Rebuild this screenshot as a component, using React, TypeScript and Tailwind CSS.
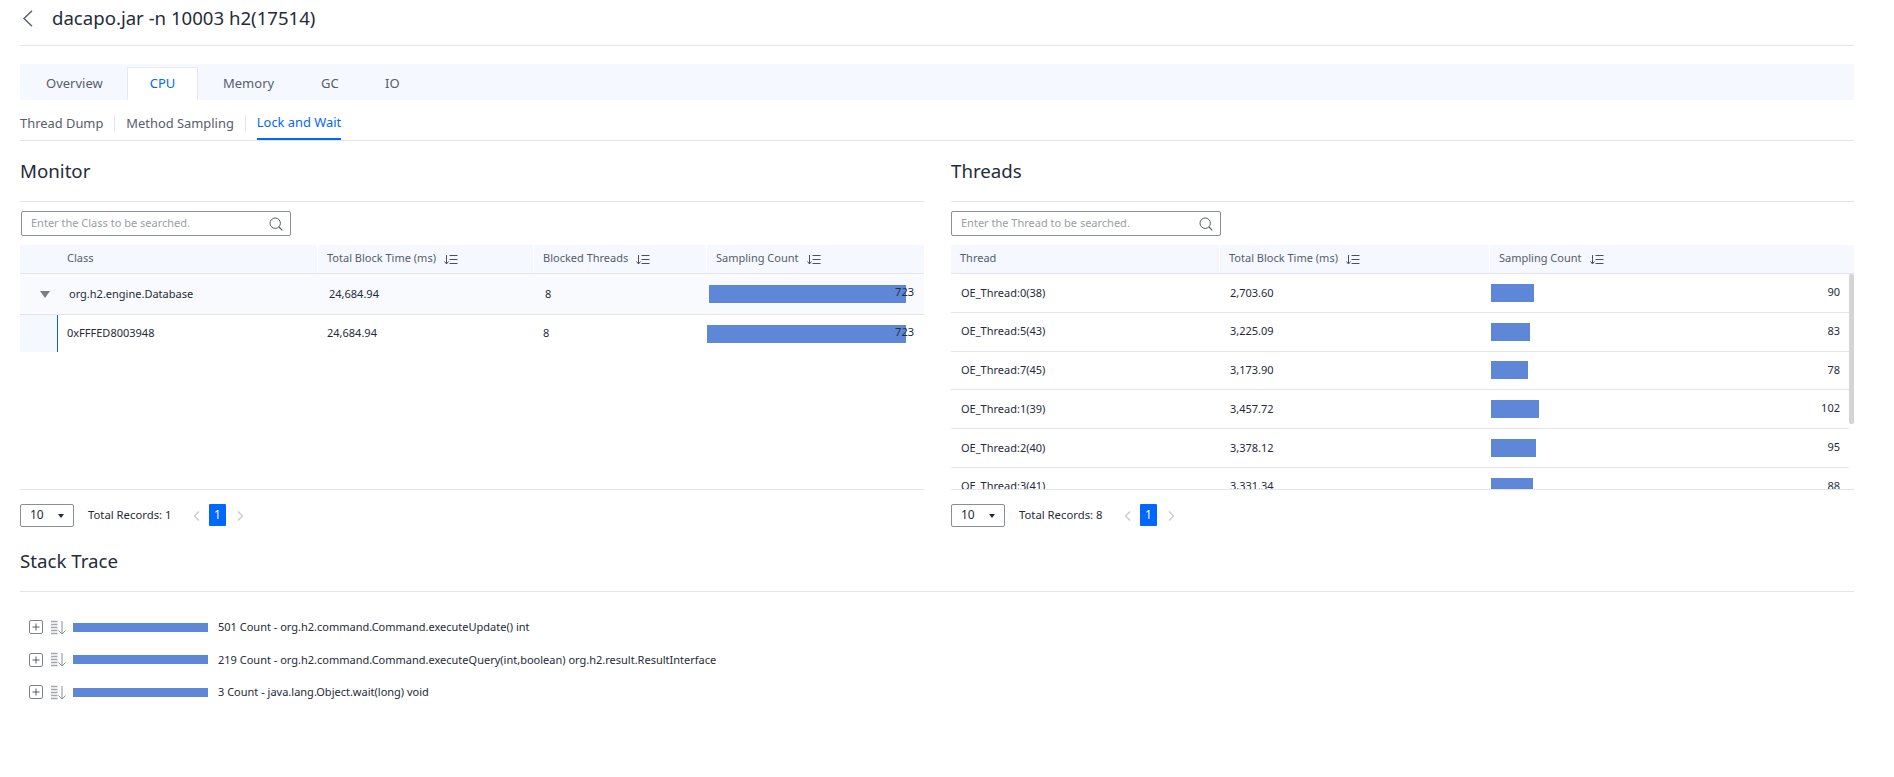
import React from "react";

const SortIcon = () => (
  <svg width="14" height="11" viewBox="0 0 14 11" className="shrink-0" fill="none">
    <path d="M2.5 1v8.5M0.5 7.5l2 2.5 2-2.5" stroke="#4a505e" strokeWidth="1" />
    <path d="M5.5 1.5h8M5.5 5.5h8M5.5 9.5h8" stroke="#4a505e" strokeWidth="1.2" />
  </svg>
);

const SearchIcon = () => (
  <svg width="14" height="14" viewBox="0 0 14 14" fill="none">
    <circle cx="6.2" cy="6.2" r="5.2" stroke="#575d6c" strokeWidth="1" />
    <path d="M10 10l3.3 3.3" stroke="#575d6c" strokeWidth="1.2" />
  </svg>
);

const PlusBox = () => (
  <svg width="14" height="14" viewBox="0 0 14 14" fill="none" className="shrink-0">
    <rect x="0.5" y="0.5" width="13" height="13" rx="1.5" stroke="#7f838e" />
    <path d="M3.5 7h7M7 3.5v7" stroke="#575d6c" />
  </svg>
);

const StackSort = () => (
  <svg width="15" height="15" viewBox="0 0 15 15" fill="none" className="shrink-0">
    <path d="M0 1.5h6.5M0 4.5h6.5M0 7.5h6.5M0 10.5h6.5M0 13.5h6.5" stroke="#a3a6ae" strokeWidth="1.3" />
    <path d="M11 1v13M7.5 10.5l3.5 3.5 3.5-3.5" stroke="#8a8e99" strokeWidth="1" />
  </svg>
);

const Section = ({ title }: { title: string }) => (
  <div className="h-[61px] flex items-center border-b border-[#e3e5ea]">
    <span className="text-[18.7px] text-[#252b3a] leading-none">{title}</span>
  </div>
);

const Search = ({ label, className }: { label: string; className?: string }) => (
  <div className={`mt-[9px] w-[270px] h-[25px] border border-[#8a8e99] rounded-[2px] flex items-center justify-between pl-[9px] pr-[7px] ${className ?? ""}`}>
    <span className="text-[11px] text-[#9a9da6]">{label}</span>
    <SearchIcon />
  </div>
);

const Chevron = ({ dir }: { dir: "l" | "r" }) => (
  <svg width="7" height="10" viewBox="0 0 7 10" fill="none">
    <path d={dir === "l" ? "M6 0.5L1.5 5L6 9.5" : "M1 0.5L5.5 5L1 9.5"} stroke="#c4c6cc" strokeWidth="1.2" />
  </svg>
);

const Pager = ({ total }: { total: number }) => (
  <div className="h-[41px] pt-[14px] flex items-start">
    <div className="w-[54px] h-[23px] border border-[#8a8e99] rounded-[2px] flex items-center justify-between pl-[9px] pr-[9px]">
      <span className="text-[12px] text-[#252b3a] -mt-[2px]">10</span>
      <span className="w-0 h-0 border-x-[3.5px] border-x-transparent border-t-[4px] border-t-[#252b3a]" />
    </div>
    <span className="ml-[14px] h-[23px] flex items-center text-[11.3px] text-[#252b3a] w-[105px]">Total Records: {total}</span>
    <span className="h-[23px] flex items-center w-[16px]"><Chevron dir="l" /></span>
    <span className="w-[17px] h-[22px] bg-[#0067ff] rounded-[1px] text-white text-[12px] flex items-center justify-center">1</span>
    <span className="h-[23px] flex items-center ml-[11px]"><Chevron dir="r" /></span>
  </div>
);

const HeaderCell = ({ label, sort, className }: { label: string; sort?: boolean; className: string }) => (
  <div className={`h-full bg-[#f5f8fe] flex items-center gap-[8px] pl-[8px] text-[11px] text-[#575d6c] ${className}`}>
    <span className="-mt-[2px]">{label}</span>
    {sort && <SortIcon />}
  </div>
);

const threads = [
  ["OE_Thread:0(38)", "2,703.60", 43, 90],
  ["OE_Thread:5(43)", "3,225.09", 39, 83],
  ["OE_Thread:7(45)", "3,173.90", 37, 78],
  ["OE_Thread:1(39)", "3,457.72", 48, 102],
  ["OE_Thread:2(40)", "3,378.12", 45, 95],
  ["OE_Thread:3(41)", "3,331.34", 42, 88],
] as const;

const stacks = [
  "501 Count - org.h2.command.Command.executeUpdate() int",
  "219 Count - org.h2.command.Command.executeQuery(int,boolean) org.h2.result.ResultInterface",
  "3 Count - java.lang.Object.wait(long) void",
];

export default function App() {
  return (
    <div className="w-[1894px] h-[777px] overflow-hidden bg-white pl-[20px] pr-[40px] font-['Noto_Sans','Open_Sans',sans-serif]">
      <div className="h-[46px] border-b border-[#e3e5ea] flex items-center pb-[8px]">
        <svg width="11" height="17" viewBox="0 0 11 17" fill="none" className="ml-[2px]">
          <path d="M10 0.8L2 8.5L10 16.2" stroke="#575d6c" strokeWidth="1.4" />
        </svg>
        <span className="ml-[19px] text-[18.6px] text-[#252b3a] leading-none">dacapo.jar -n 10003 h2(17514)</span>
      </div>

      <div className="mt-[18px] h-[36px] bg-[#f5f8fe] flex items-end text-[13px] text-[#575d6c]">
        <div className="h-[33px] flex items-center pl-[26px] w-[107px]">Overview</div>
        <div className="h-[33px] w-[71px] flex items-center justify-center bg-white border border-b-0 border-[#e6e9f0] text-[#0067ff]">CPU</div>
        <div className="h-[33px] flex items-center ml-[25px] w-[98px]">Memory</div>
        <div className="h-[33px] flex items-center w-[64px]">GC</div>
        <div className="h-[33px] flex items-center">IO</div>
      </div>

      <div className="h-[41px] border-b border-[#e3e5ea] flex text-[12.9px] text-[#575d6c]">
        <div className="flex items-center h-[40px] pt-[7px]">Thread Dump</div>
        <div className="w-px h-[16px] bg-[#e3e5ea] mt-[15px] mx-[11px]" />
        <div className="flex items-center h-[40px] pt-[7px]">Method Sampling</div>
        <div className="w-px h-[16px] bg-[#e3e5ea] mt-[15px] mx-[11px]" />
        <div className="flex items-center h-[40px] pt-[7px] text-[#0067ff] border-b-2 border-[#0067ff]">Lock and Wait</div>
      </div>

      <div className="flex gap-[27px]">
        <div className="w-[904px]">
          <Section title="Monitor" />
          <Search label="Enter the Class to be searched." className="ml-px" />
          <div className="mt-[9px] h-[245px] border-b border-[#e3e5ea] text-[11px] text-[#252b3a]">
            <div className="h-[29px] flex gap-px border-b border-[#e3e5ea]">
              <HeaderCell label="Class" className="w-[297px] pl-[47px]!" />
              <HeaderCell label="Total Block Time (ms)" sort className="w-[215px] pl-[9px]!" />
              <HeaderCell label="Blocked Threads" sort className="w-[172px] pl-[9px]!" />
              <HeaderCell label="Sampling Count" sort className="flex-1 pl-[9px]!" />
            </div>
            <div className="h-[41px] bg-[#f8fafe] border-b border-[#e3e5ea] flex items-center">
              <div className="w-[49px] pl-[20px] flex"><span className="w-0 h-0 border-x-[5px] border-x-transparent border-t-[7px] border-t-[#7c7f88]" /></div>
              <div className="w-[260px]">org.h2.engine.Database</div>
              <div className="w-[216px]">24,684.94</div>
              <div className="w-[164px]">8</div>
              <div className="relative flex-1 h-[18px]">
                <div className="h-full w-[197px] bg-[#5e87d8]" />
                <span className="absolute right-[10px] -top-[1px]">723</span>
              </div>
            </div>
            <div className="h-[37px] flex items-center">
              <div className="w-[38px] h-full bg-[#f5f8fe] border-r border-[#0f62d6]" />
              <div className="w-[269px] pl-[9px]">0xFFFED8003948</div>
              <div className="w-[216px]">24,684.94</div>
              <div className="w-[164px]">8</div>
              <div className="relative flex-1 h-[18px]">
                <div className="h-full w-[199px] bg-[#5e87d8]" />
                <span className="absolute right-[10px] -top-[1px]">723</span>
              </div>
            </div>
          </div>
          <Pager total={1} />
        </div>

        <div className="w-[903px]">
          <Section title="Threads" />
          <Search label="Enter the Thread to be searched." />
          <div className="mt-[9px] h-[245px] border-b border-[#e3e5ea] text-[11px] text-[#252b3a] relative overflow-hidden">
            <div className="h-[29px] flex gap-px border-b border-[#e3e5ea]">
              <HeaderCell label="Thread" className="w-[268px] pl-[9px]!" />
              <HeaderCell label="Total Block Time (ms)" sort className="w-[269px] pl-[9px]!" />
              <HeaderCell label="Sampling Count" sort className="flex-1 pl-[9px]!" />
            </div>
            {threads.map(([name, time, w, c]) => (
              <div key={name} className="h-[38.75px] mr-[5px] border-b border-[#e3e5ea] flex items-center shrink-0">
                <div className="w-[279px] pl-[10px]">{name}</div>
                <div className="w-[261px]">{time}</div>
                <div className="flex-1 h-[18px] relative">
                  <div className="h-full bg-[#5e87d8]" style={{ width: w }} />
                </div>
                <span className="pr-[9px] -mt-[1px]">{c}</span>
              </div>
            ))}
            <div className="absolute right-0 top-[29px] w-[5px] h-[150px] rounded-[2px] bg-[#d4d4d4]" />
          </div>
          <Pager total={8} />
        </div>
      </div>

      <Section title="Stack Trace" />
      <div className="pt-[19px] text-[11px] text-[#252b3a]">
        {stacks.map((s) => (
          <div key={s} className="h-[32.5px] flex items-center pl-[9px]">
            <PlusBox />
            <span className="ml-[8px]"><StackSort /></span>
            <div className="ml-[7px] w-[135px] h-[9px] bg-[#5e87d8]" />
            <span className="ml-[10px]">{s}</span>
          </div>
        ))}
      </div>
    </div>
  );
}
